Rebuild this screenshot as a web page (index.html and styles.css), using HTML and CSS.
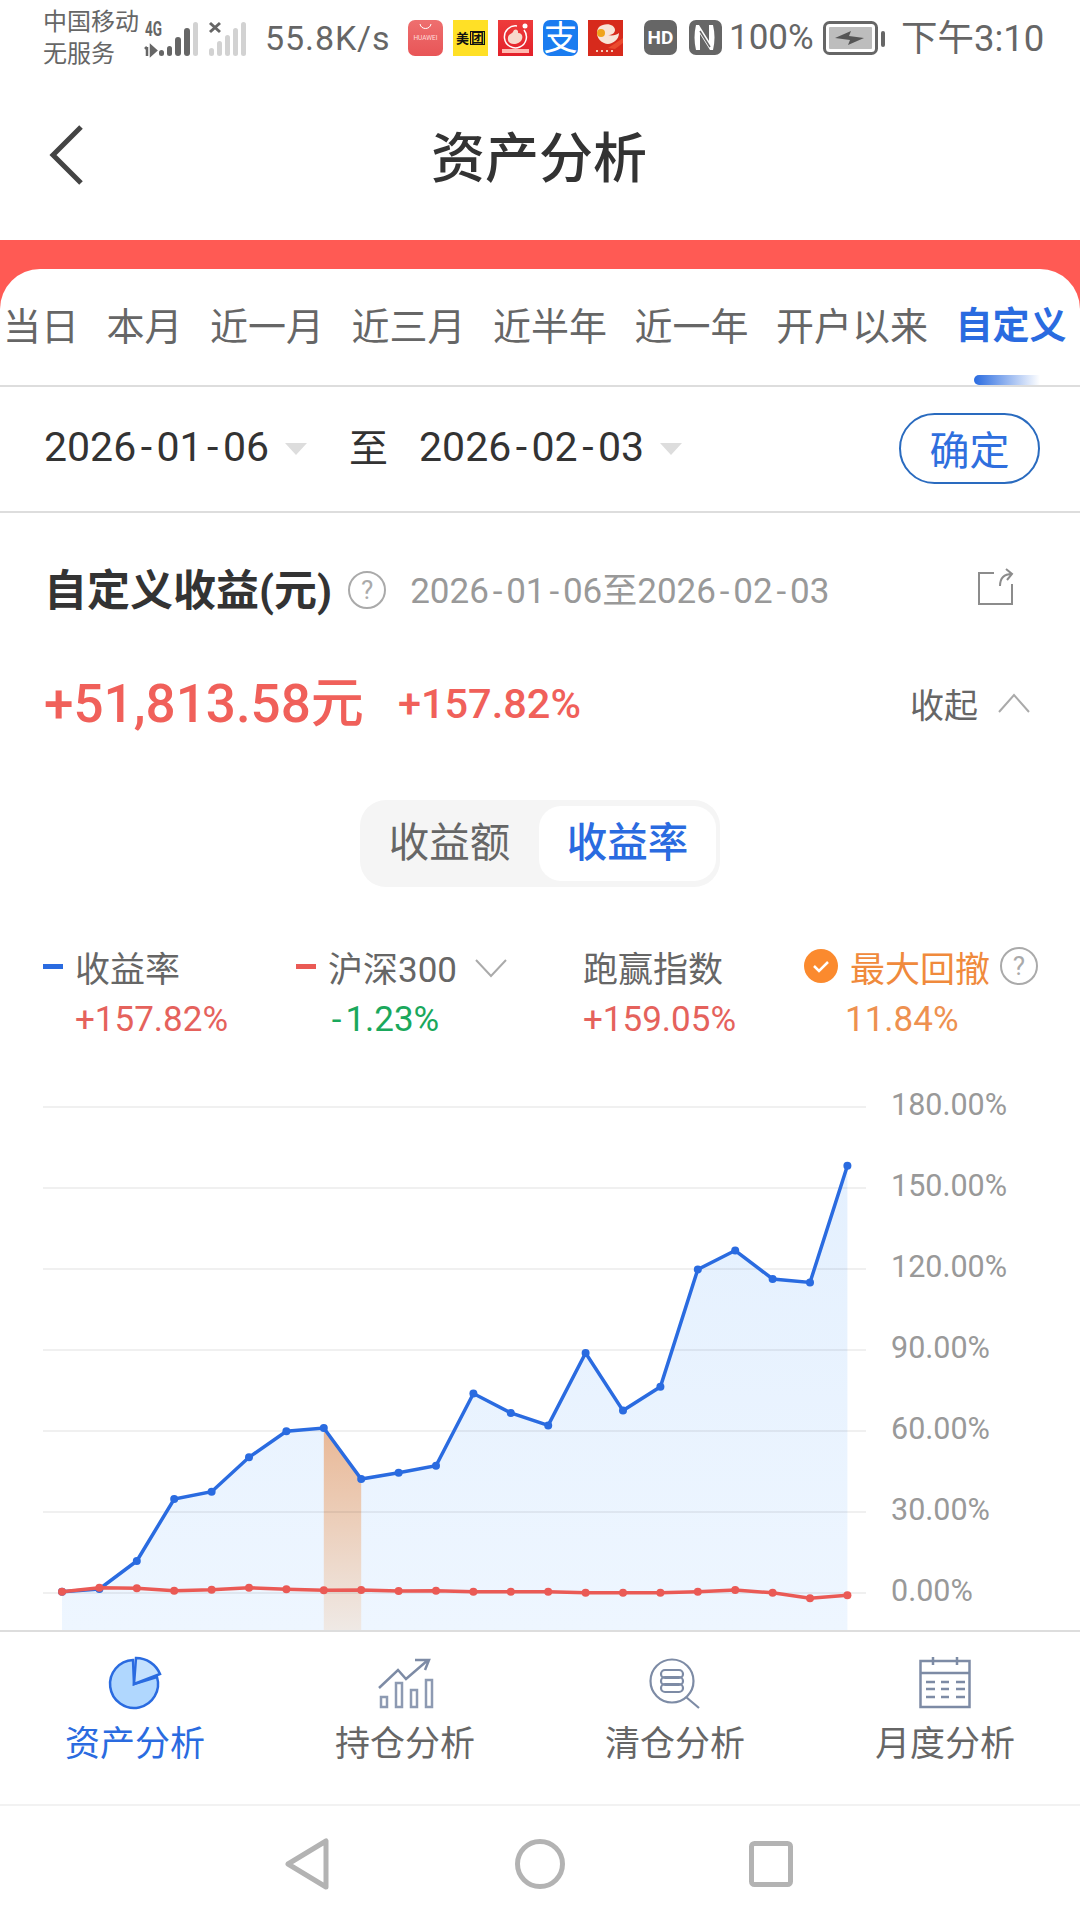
FILE: index.html
```html
<!DOCTYPE html>
<html lang="zh-CN">
<head>
    <meta charset="UTF-8">
    <meta name="viewport" content="width=device-width, initial-scale=1.0">
    <title>资产分析</title>
    <link rel="stylesheet" href="styles.css">
</head>
<body>
    <div class="page">
        <div class="status-bar">
            <div class="carrier"><span>中国移动</span><span>无服务</span></div>
            <svg class="signal" width="110" height="50" viewBox="140 10 110 50">
                <text x="145" y="33" class="signal-label" textLength="17" lengthAdjust="spacingAndGlyphs">4G</text>
                <path d="M147 44v9M145 46l2-2M151 43v9l5-4.500z" stroke="#666" stroke-width="2.500" fill="#666"/>
                <g fill="#666">
                    <rect x="159" y="47" width="5" height="6" rx="2.500"/>
                    <rect x="167" y="43" width="5" height="10" rx="2.500"/>
                    <rect x="175" y="34" width="6" height="19" rx="3"/>
                    <rect x="184" y="25" width="6" height="28" rx="3"/>
                </g>
                <g fill="#d2d2d2">
                    <rect x="193" y="19" width="5" height="34" rx="2.500"/>
                    <rect x="209" y="45" width="5" height="8" rx="2.500"/>
                    <rect x="217" y="38" width="5" height="15" rx="2.500"/>
                    <rect x="225" y="32" width="5" height="21" rx="2.500"/>
                    <rect x="233" y="25" width="5" height="28" rx="2.500"/>
                    <rect x="241" y="19" width="5" height="34" rx="2.500"/>
                </g>
                <path d="M210 20l10 9M220 20l-10 9" stroke="#666" stroke-width="3"/>
            </svg>
            <span class="speed">55.8K/s</span>
            <div class="apps">
                <div class="app app-huawei">
                    <svg width="35" height="14" viewBox="0 0 35 14"><path d="M12 4c1 6 10 6 11 0" stroke="#fff" stroke-width="1" fill="none"/></svg>
                    <span>HUAWEI</span>
                </div>
                <div class="app app-meituan"><span>美</span><span class="boxed">团</span></div>
                <div class="app app-red">
                    <svg width="35" height="36" viewBox="0 0 35 36">
                        <path d="M26 10a11 11 0 1 1-7-4" fill="none" stroke="#fff" stroke-width="1.500"/>
                        <path d="M10 20c-1-6 4-6 5-8 1-4 6-3 5 1 4 0 5 3 4 6-2 6-13 7-14 1z" fill="#f8d9cc"/>
                        <circle cx="27" cy="6" r="2.500" fill="#fff"/>
                        <rect x="4" y="29" width="27" height="4" fill="#ffb9b0"/>
                    </svg>
                </div>
                <div class="app app-alipay">支</div>
                <div class="app app-brand">
                    <svg width="35" height="36" viewBox="0 0 35 36">
                        <path d="M11 7c6-5 16-3 16 3 0 3-3 5-7 5 4 1 9 0 11-2 0 8-9 13-15 10C9 20 7 12 11 7z" fill="#f8e4d8"/>
                        <circle cx="13" cy="13" r="4" fill="#f0a41c"/>
                        <path d="M20 28l15-10v5l-8 6z" fill="#ea4a2e"/>
                        <path d="M8 31h20" stroke="#f5c9b6" stroke-width="2" stroke-dasharray="2 3"/>
                    </svg>
                </div>
            </div>
            <span class="badge-hd">HD</span>
            <svg class="nfc" width="33" height="35" viewBox="0 0 33 35">
                <rect width="33" height="35" rx="7" fill="#666"/>
                <path d="M7 5c-2 8-2 17 0 25h4V14l10 16h3c2-8 2-17 0-25h-4v16L10 5z" fill="#fff"/>
                <path d="M11 11l10 16" stroke="#666" stroke-width="1.500"/>
            </svg>
            <span class="battery-pct">100%</span>
            <svg class="battery" width="63" height="34" viewBox="0 0 63 34">
                <rect x="1.500" y="1.500" width="52" height="31" rx="5" fill="none" stroke="#666" stroke-width="3"/>
                <rect x="6" y="6" width="43" height="22" rx="1" fill="#bdbdbd"/>
                <path d="M12 17l16-7-2 5 15 2-16 7 2-5z" fill="#555"/>
                <rect x="58" y="10" width="4" height="16" rx="2" fill="#666"/>
            </svg>
            <span class="clock">下午3:10</span>
        </div>

        <div class="nav-bar">
            <svg class="back" width="34" height="60" viewBox="0 0 34 60">
                <path d="M32 2L4 30l28 28" fill="none" stroke="#444" stroke-width="5"/>
            </svg>
            <h1>资产分析</h1>
        </div>

        <div class="tab-band">
            <div class="tab-panel">
                <div class="period-tabs">
                    <span>当日</span>
                    <span>本月</span>
                    <span>近一月</span>
                    <span>近三月</span>
                    <span>近半年</span>
                    <span>近一年</span>
                    <span>开户以来</span>
                    <span class="period-active">自定义</span>
                </div>
                <div class="period-indicator"></div>
            </div>
        </div>

        <div class="date-row">
            <span class="date">2026<span class="dash">-</span>01<span class="dash">-</span>06</span>
            <span class="caret"></span>
            <span class="date-to">至</span>
            <span class="date">2026<span class="dash">-</span>02<span class="dash">-</span>03</span>
            <span class="caret"></span>
            <button class="confirm">确定</button>
        </div>

        <div class="title-row">
            <h2>自定义收益(元)</h2>
            <span class="help">?</span>
            <span class="range">2026<span class="dash">-</span>01<span class="dash">-</span>06至2026<span class="dash">-</span>02<span class="dash">-</span>03</span>
            <svg class="share" width="38" height="37" viewBox="0 0 38 37">
                <path d="M17 5H2v31h33V16" fill="none" stroke="#8c8c8c" stroke-width="2"/>
                <path d="M23 18c0-8 4-12 12-12M29 1l6 5-5 6" fill="none" stroke="#8c8c8c" stroke-width="2"/>
            </svg>
        </div>

        <div class="amount-row">
            <span class="amount">+51,813.58元</span>
            <span class="amount-rate">+157.82%</span>
            <span class="collapse">收起</span>
            <svg class="chevron-up" width="34" height="20" viewBox="0 0 34 20">
                <path d="M2 19L17 2l15 17" fill="none" stroke="#aaa" stroke-width="2"/>
            </svg>
        </div>

        <div class="segment">
            <span class="segment-item">收益额</span>
            <span class="segment-item segment-active">收益率</span>
        </div>

        <div class="legend">
            <div class="legend-item legend-first">
                <div class="legend-head"><i class="legend-dash dash-blue"></i>收益率</div>
                <div class="legend-value value-up">+157.82%</div>
            </div>
            <div class="legend-item legend-second">
                <div class="legend-head">
                    <i class="legend-dash dash-red"></i>沪深300
                    <svg class="chevron-down" width="32" height="20" viewBox="0 0 32 20">
                        <path d="M1 2l15 16L31 2" fill="none" stroke="#aaa" stroke-width="2"/>
                    </svg>
                </div>
                <div class="legend-value value-down"><span class="dash">-</span>1.23%</div>
            </div>
            <div class="legend-item legend-third">
                <div class="legend-head">跑赢指数</div>
                <div class="legend-value value-up">+159.05%</div>
            </div>
            <div class="legend-item">
                <div class="legend-head legend-orange">
                    <svg class="check" width="34" height="34" viewBox="0 0 34 34">
                        <circle cx="17" cy="17" r="17" fill="#fb8a2e"/>
                        <path d="M10 17l5 5 9-9" fill="none" stroke="#fff" stroke-width="2.500"/>
                    </svg>
                    最大回撤
                    <span class="help help-legend">?</span>
                </div>
                <div class="legend-value value-drawdown">11.84%</div>
            </div>
        </div>

        <svg class="chart" width="1080" height="550" viewBox="0 1080 1080 550">
            <defs>
                <linearGradient id="areaFill" x1="0" y1="0" x2="0" y2="1">
                    <stop offset="0" stop-color="#e4f0fe"/>
                    <stop offset="1" stop-color="#eef6ff"/>
                </linearGradient>
                <linearGradient id="bandFill" x1="0" y1="0" x2="0" y2="1">
                    <stop offset="0" stop-color="#e9b896"/>
                    <stop offset="1" stop-color="#efe9e5"/>
                </linearGradient>
                <marker id="dotBlue" markerUnits="userSpaceOnUse" markerWidth="10" markerHeight="10" refX="5" refY="5">
                    <circle cx="5" cy="5" r="4" fill="#2a6be0"/>
                </marker>
                <marker id="dotRed" markerUnits="userSpaceOnUse" markerWidth="10" markerHeight="10" refX="5" refY="5">
                    <circle cx="5" cy="5" r="4" fill="#ea5a55"/>
                </marker>
            </defs>
            <polygon fill="url(#areaFill)" points="62,1591.7 99.4,1589 136.8,1561 174.2,1499 211.6,1491.7 249,1457.3 286.4,1431.3 323.8,1428 361.2,1479 398.6,1472.7 436,1465.7 473.4,1393.5 510.8,1413 548.2,1425.4 585.6,1353 623,1410.6 660.4,1386.8 697.8,1269.4 735.2,1250.5 772.6,1279 810,1282.5 847.4,1165.8 847.4,1630 62,1630"/>
            <polygon fill="url(#bandFill)" points="323.8,1428 361.2,1479 361.2,1630 323.8,1630"/>
            <g class="grid">
                <line x1="43" x2="866" y1="1107" y2="1107"/>
                <line x1="43" x2="866" y1="1188" y2="1188"/>
                <line x1="43" x2="866" y1="1269" y2="1269"/>
                <line x1="43" x2="866" y1="1350" y2="1350"/>
                <line x1="43" x2="866" y1="1431" y2="1431"/>
                <line x1="43" x2="866" y1="1512" y2="1512"/>
                <line x1="43" x2="866" y1="1593" y2="1593"/>
            </g>
            <polyline class="line-blue" points="62,1591.7 99.4,1589 136.8,1561 174.2,1499 211.6,1491.7 249,1457.3 286.4,1431.3 323.8,1428 361.2,1479 398.6,1472.7 436,1465.7 473.4,1393.5 510.8,1413 548.2,1425.4 585.6,1353 623,1410.6 660.4,1386.8 697.8,1269.4 735.2,1250.5 772.6,1279 810,1282.5 847.4,1165.8"/>
            <polyline class="line-red" points="62,1591.7 99.4,1587.7 136.8,1588.3 174.2,1590.7 211.6,1589.7 249,1587.7 286.4,1589.3 323.8,1590.3 361.2,1590 398.6,1591 436,1590.7 473.4,1591.7 510.8,1591.7 548.2,1591.7 585.6,1592.8 623,1592.8 660.4,1592.8 697.8,1591.7 735.2,1590 772.6,1592.8 810,1598.3 847.4,1595.2"/>
            <g class="axis">
                <text x="891" y="1115">180.00%</text>
                <text x="891" y="1196">150.00%</text>
                <text x="891" y="1277">120.00%</text>
                <text x="891" y="1358">90.00%</text>
                <text x="891" y="1439">60.00%</text>
                <text x="891" y="1520">30.00%</text>
                <text x="891" y="1601">0.00%</text>
            </g>
        </svg>

        <div class="bottom-tabs">
            <div class="bottom-tab bottom-active">
                <svg width="60" height="56" viewBox="0 0 60 56">
                    <path d="M28 5A24 24 0 1 0 52 22L29 29z" fill="#b0d7fe" stroke="#2a6be0" stroke-width="2.500"/>
                    <path d="M31 3A26 26 0 0 1 55 19L29 29z" fill="#c4e1fe" stroke="#2a6be0" stroke-width="2.500"/>
                </svg>
                <span>资产分析</span>
            </div>
            <div class="bottom-tab">
                <svg class="icon-trend" width="56" height="56" viewBox="-1 -4 56 56">
                    <path d="M0 29l19-18 8 9L49 1M36 1h14l-4 10" fill="none" stroke="#7d8ba5" stroke-width="2.500"/>
                    <g fill="none" stroke="#8d9ab2" stroke-width="2.500">
                        <rect x="2" y="38" width="6" height="10"/>
                        <rect x="17" y="24" width="6" height="24"/>
                        <rect x="32" y="31" width="6" height="17"/>
                        <rect x="47" y="21" width="6" height="27"/>
                    </g>
                </svg>
                <span>持仓分析</span>
            </div>
            <div class="bottom-tab">
                <svg width="52" height="56" viewBox="0 -3 52 56">
                    <g fill="none" stroke="#7d8ba5" stroke-width="2.200">
                        <circle cx="23" cy="23" r="21.500"/>
                        <path d="M37 39l13 11"/>
                        <rect x="12" y="12" width="22" height="8" rx="4"/>
                        <rect x="12" y="19" width="22" height="8" rx="4"/>
                        <rect x="12" y="26" width="22" height="8" rx="4"/>
                    </g>
                </svg>
                <span>清仓分析</span>
            </div>
            <div class="bottom-tab">
                <svg width="52" height="56" viewBox="0 -2 52 56">
                    <g fill="none" stroke="#7d8ba5" stroke-width="2.500">
                        <rect x="1.500" y="4" width="49" height="46"/>
                        <path d="M1 16h50M14 0v8M38 0v8"/>
                        <path d="M7 25h9M22 25h8M37 25h9M7 32h9M22 32h8M37 32h9M7 40h9M22 40h8M37 40h9"/>
                    </g>
                </svg>
                <span>月度分析</span>
            </div>
        </div>

        <div class="system-nav">
            <svg width="44" height="52" viewBox="0 0 44 52"><path d="M3 26L41 3v46z" fill="none" stroke="#b3b3b3" stroke-width="5" stroke-linejoin="round"/></svg>
            <svg width="50" height="50" viewBox="0 0 50 50"><circle cx="25" cy="25" r="22.500" fill="none" stroke="#b3b3b3" stroke-width="5"/></svg>
            <svg class="nav-square" width="44" height="46" viewBox="0 0 44 46"><rect x="2.500" y="2.500" width="39" height="41" rx="3" fill="none" stroke="#b3b3b3" stroke-width="5"/></svg>
        </div>
    </div>
</body>
</html>
```

FILE: styles.css
```css
* {
    box-sizing: border-box;
}
body {
    margin: 0;
    background: #fff;
    font-family: Roboto, "Noto Sans CJK SC", sans-serif;
    color: #666;
}
h1, h2 {
    margin: 0;
}
.page {
    width: 1080px;
    height: 1920px;
    overflow: hidden;
    display: flex;
    flex-direction: column;
}

/* status bar */
.status-bar {
    height: 80px;
    padding-left: 43px;
    display: flex;
    align-items: center;
    flex-shrink: 0;
}
.carrier {
    width: 97px;
    display: flex;
    flex-direction: column;
    font-size: 24px;
    line-height: 32px;
    margin-top: -5px;
}
.signal {
    flex-shrink: 0;
    margin-top: -5px;
}
.signal-label {
    font-size: 21px;
    font-weight: 700;
    fill: #666;
}
.speed {
    width: 121px;
    margin-left: 15px;
    margin-right: 2px;
    font-size: 34px;
    letter-spacing: 0.9px;
    white-space: nowrap;
    margin-top: -5px;
}
.apps {
    margin-left: 20px;
    display: flex;
    gap: 10px;
    margin-top: -5px;
}
.app {
    width: 35px;
    height: 36px;
    overflow: hidden;
    display: flex;
    align-items: center;
    justify-content: center;
}
.app-huawei {
    flex-direction: column;
    justify-content: flex-start;
    border-radius: 7px;
    background: linear-gradient(#ee6f6f, #e85557);
    color: #ffdcdc;
    font-size: 6.5px;
    line-height: 8px;
}
.app-meituan {
    background: #ffe026;
    color: #111;
    font-size: 13px;
    font-weight: 700;
}
.boxed {
    border: 1px solid #111;
    line-height: 12px;
    margin-left: 1px;
}
.app-red {
    background: linear-gradient(#ee3c3c, #e3202a);
}
.app-alipay {
    border-radius: 7px;
    background: #1a7cf0;
    color: #fff;
    font-size: 34px;
    line-height: 36px;
}
.app-brand {
    background: #d72a1c;
}
.badge-hd {
    width: 33px;
    height: 35px;
    margin-left: 21px;
    margin-top: -5px;
    border-radius: 7px;
    background: #666;
    color: #fff;
    font-size: 19px;
    font-weight: 700;
    line-height: 35px;
    text-align: center;
}
.nfc {
    flex-shrink: 0;
    margin-left: 12px;
    margin-top: -5px;
}
.battery-pct {
    width: 87px;
    margin-left: 7px;
    margin-top: -5px;
    font-size: 35px;
}
.battery {
    flex-shrink: 0;
    margin-left: 7px;
    margin-top: -5px;
}
.clock {
    margin-left: 15px;
    margin-top: -10px;
    font-size: 36.500px;
    white-space: nowrap;
}

/* title bar */
.nav-bar {
    height: 160px;
    flex-shrink: 0;
    position: relative;
    display: flex;
    align-items: center;
    justify-content: center;
}
.back {
    position: absolute;
    left: 49px;
    top: 45px;
}
.nav-bar h1 {
    font-size: 54px;
    font-weight: 500;
    color: #333;
    margin-left: -2px;
    margin-top: -12px;
}

/* period tabs */
.tab-band {
    height: 147px;
    flex-shrink: 0;
    padding-top: 29px;
    background: #ff5a54;
}
.tab-panel {
    position: relative;
    height: 118px;
    background: #fff;
    border-radius: 40px 40px 0 0;
    border-bottom: 2px solid #ddd;
}
.period-tabs {
    height: 116px;
    padding: 0 0 8px 3px;
    display: flex;
    align-items: center;
    gap: 27.500px;
    font-size: 38px;
    white-space: nowrap;
}
.period-active {
    color: #2a6be0;
    font-weight: 700;
    font-size: 37px;
}
.period-indicator {
    position: absolute;
    left: 974px;
    top: 106px;
    width: 66px;
    height: 10px;
    border-radius: 5px 0 0 5px;
    background: linear-gradient(to right, #2a6be0, #ffffff00);
}

/* date range */
.date-row {
    height: 126px;
    flex-shrink: 0;
    padding: 0 40px 4px 44px;
    display: flex;
    align-items: center;
    border-bottom: 2px solid #ddd;
    font-size: 41px;
    color: #333;
}
.dash {
    margin: 0 0.11em;
}
.caret {
    width: 0;
    height: 0;
    margin: 4px 46px 0 16px;
    border-left: 11px solid transparent;
    border-right: 11px solid transparent;
    border-top: 12px solid #ddd;
}
.date-to {
    width: 70px;
    font-size: 39px;
    margin-left: -4px;
    margin-top: -4px;
}
.confirm {
    width: 141px;
    height: 71px;
    margin-left: auto;
    margin-top: 2px;
    padding: 0;
    background: #fff;
    border: 2px solid #2a6bbf;
    border-radius: 36px;
    color: #2f6fde;
    font-family: inherit;
    font-size: 40px;
}

/* summary */
.title-row {
    height: 72px;
    margin-top: 41px;
    padding-left: 44px;
    flex-shrink: 0;
    position: relative;
    display: flex;
    align-items: center;
}
.title-row h2 {
    font-size: 43px;
    font-weight: 700;
    color: #333;
    white-space: nowrap;
    margin-top: -7px;
}
.help {
    width: 38px;
    height: 38px;
    margin-left: 16px;
    border: 2px solid #aaa;
    border-radius: 50%;
    color: #aaa;
    font-size: 26px;
    line-height: 34px;
    text-align: center;
    flex-shrink: 0;
}
.range {
    margin-left: 24px;
    margin-top: -5px;
    font-size: 35px;
    color: #999;
    white-space: nowrap;
}
.share {
    position: absolute;
    left: 977px;
    top: 14px;
}
.amount-row {
    height: 80px;
    margin-top: 37px;
    padding-left: 44px;
    flex-shrink: 0;
    display: flex;
    align-items: center;
    white-space: nowrap;
    color: #f0605a;
    font-weight: 500;
}
.amount {
    font-size: 53px;
    margin-top: -8px;
}
.amount-rate {
    margin-left: 34px;
    font-size: 41.500px;
}
.collapse {
    margin-left: auto;
    font-size: 34px;
    font-weight: 400;
    color: #666;
}
.chevron-up {
    margin: 0 49px 0 19px;
}

/* switch */
.segment {
    width: 360px;
    height: 87px;
    margin: 57px auto 0;
    padding: 6px 4px 6px 0;
    flex-shrink: 0;
    display: flex;
    background: #f5f5f5;
    border-radius: 26px;
}
.segment-item {
    flex: 1;
    font-size: 40.500px;
    line-height: 75px;
    text-align: center;
}
.segment-active {
    flex: 0 0 177px;
    background: #fff;
    border-radius: 22px;
    color: #2a6be0;
    font-weight: 500;
}

/* legend */
.legend {
    height: 104px;
    margin-top: 55px;
    padding-left: 43px;
    flex-shrink: 0;
    display: flex;
}
.legend-first {
    width: 253px;
}
.legend-second {
    width: 287px;
}
.legend-third {
    width: 221px;
}
.legend-head {
    height: 52px;
    display: flex;
    align-items: center;
    font-size: 35px;
    white-space: nowrap;
    margin-top: -2px;
}
.legend-dash {
    width: 20px;
    height: 5px;
    margin-right: 12px;
}
.dash-blue {
    background: #2a6be0;
}
.dash-red {
    background: #ea5a55;
}
.chevron-down {
    margin-left: 18px;
    margin-top: 4px;
}
.legend-value {
    font-size: 35px;
    line-height: 52px;
    margin-top: 2px;
}
.legend-first .legend-value,
.legend-second .legend-value {
    margin-left: 32px;
}
.value-up {
    color: #e5625c;
}
.value-down {
    color: #1aa85c;
}
.value-drawdown {
    margin-left: 41px;
    color: #ee9150;
}
.legend-orange {
    color: #f08a3c;
}
.check {
    margin-right: 12px;
    flex-shrink: 0;
}
.help-legend {
    margin-left: 10px;
}

/* chart */
.chart {
    display: block;
    margin-top: 34px;
    flex-shrink: 0;
}
.grid line {
    stroke: #000;
    stroke-opacity: 0.08;
    stroke-width: 1.500;
}
.line-blue {
    fill: none;
    stroke: #2a6be0;
    stroke-width: 3.500;
    marker-start: url(#dotBlue);
    marker-mid: url(#dotBlue);
    marker-end: url(#dotBlue);
}
.line-red {
    fill: none;
    stroke: #ea5a55;
    stroke-width: 3.500;
    marker-start: url(#dotRed);
    marker-mid: url(#dotRed);
    marker-end: url(#dotRed);
}
.axis text {
    font-size: 30.500px;
    fill: #999;
}

/* bottom tabs */
.bottom-tabs {
    height: 176px;
    flex-shrink: 0;
    padding-top: 23px;
    display: flex;
    border-top: 2px solid #ddd;
    border-bottom: 2px solid #f2f2f2;
}
.bottom-tab {
    width: 270px;
    display: flex;
    flex-direction: column;
    align-items: center;
    font-size: 35px;
    line-height: 50px;
}
.bottom-tab span {
    margin-top: 9px;
}
.bottom-active {
    color: #2a6be0;
}
.icon-trend {
    margin-left: 2px;
}
.system-nav {
    height: 114px;
    display: flex;
    align-items: center;
    justify-content: center;
    gap: 186px;
    padding-top: 2px;
}
.nav-square {
    margin: 0 2px 0 -2px;
}
```
